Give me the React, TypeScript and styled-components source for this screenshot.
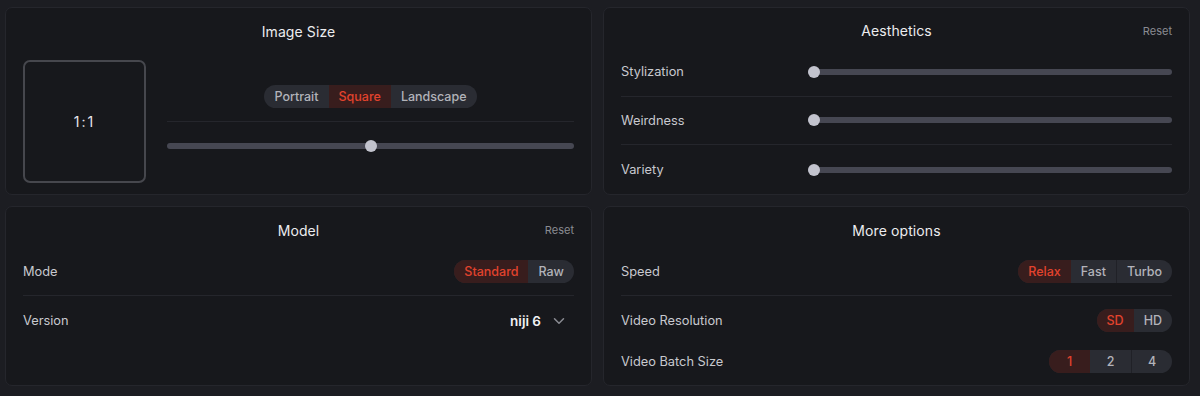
import React from "react";
import styled, { createGlobalStyle } from "styled-components";
import { ChevronDown } from "lucide-react";

const Global = createGlobalStyle`
  html, body { margin: 0; padding: 0; background: #1c1d22; }
  body { font-family: Inter, "Noto Sans", "Liberation Sans", sans-serif; -webkit-font-smoothing: antialiased; }
  * { box-sizing: border-box; }
`;

const Page = styled.div`
  width: 1200px;
  height: 396px;
  padding: 7px 10px 0 5px;
  display: grid;
  grid-template-columns: 587px 587px;
  grid-template-rows: 188px 180px;
  column-gap: 11px;
  row-gap: 11px;
`;

const Card = styled.section`
  background: #17181c;
  border: 1px solid #25262c;
  border-radius: 7px;
  padding: 13px 17px 0;
  display: flex;
  flex-direction: column;
`;

const Header = styled.div`
  display: grid;
  grid-template-columns: 1fr auto 1fr;
  align-items: center;
  height: 20px;
  margin-bottom: 7px;
`;

const Title = styled.h2`
  grid-column: 2;
  margin: 0;
  font-size: 14px;
  font-weight: 400;
  color: #ececef;
  letter-spacing: 0.1px;
`;

const ResetButton = styled.button`
  grid-column: 3;
  justify-self: end;
  background: none;
  border: none;
  padding: 0;
  font-family: inherit;
  font-size: 11px;
  color: #8a8b92;
  cursor: pointer;
`;

const Row = styled.div<{ $h?: number; $divider?: boolean; $cols?: string }>`
  height: ${(p) => p.$h ?? 49}px;
  display: grid;
  grid-template-columns: ${(p) => p.$cols ?? "1fr auto"};
  align-items: center;
  border-bottom: ${(p) => (p.$divider ? "1px solid #25262c" : "none")};
`;

const Label = styled.span`
  font-size: 12.8px;
  color: #c8c9cf;
`;

const Seg = styled.div`
  display: inline-flex;
  height: 23px;
  border-radius: 12px;
  overflow: hidden;
  background: #2a2c33;
`;

const SegItem = styled.button<{ $active?: boolean; $sep?: boolean; $w?: number }>`
  border: none;
  margin: 0;
  font-family: inherit;
  font-size: 12.5px;
  font-weight: 500;
  padding: 0 10px;
  ${(p) => (p.$w ? `width: ${p.$w}px; padding: 0;` : "")}
  display: flex;
  align-items: center;
  justify-content: center;
  background: ${(p) => (p.$active ? "#381d1d" : "transparent")};
  color: ${(p) => (p.$active ? "#e2432d" : "#b2b3ba")};
  border-left: ${(p) => (p.$sep ? "1px solid #202127" : "none")};
  cursor: pointer;
`;

const Track = styled.div`
  position: relative;
  height: 6px;
  border-radius: 3px;
  background: #464752;
  width: 100%;
`;

const Thumb = styled.div`
  position: absolute;
  top: 50%;
  width: 12px;
  height: 12px;
  margin-top: -6px;
  border-radius: 50%;
  background: #c2c3cd;
`;

const SizeBody = styled.div`
  display: flex;
  align-items: center;
  gap: 21px;
  padding: 12px 0 11px;
`;

const RatioBox = styled.div`
  width: 123px;
  height: 123px;
  flex: none;
  border: 2px solid #46474d;
  border-radius: 7px;
  display: flex;
  align-items: center;
  justify-content: center;
  font-size: 14px;
  color: #e6e6ea;
  letter-spacing: 2px;
`;

const SizeControls = styled.div`
  flex: 1;
  display: flex;
  flex-direction: column;
  justify-content: center;
`;

const SizeBlock = styled.div<{ $divider?: boolean }>`
  height: 49px;
  display: flex;
  align-items: center;
  justify-content: center;
  border-bottom: ${(p) => (p.$divider ? "1px solid #25262c" : "none")};
`;

const Select = styled.button`
  display: flex;
  align-items: center;
  gap: 9px;
  background: none;
  border: none;
  padding: 0 6px 0 0;
  font-family: inherit;
  font-size: 13.5px;
  font-weight: 600;
  color: #f1f1f3;
  cursor: pointer;
  svg { color: #8a8b92; }
`;

function Slider({ value }: { value: number }) {
  return (
    <Track>
      <Thumb style={{ left: `calc(${value * 100}% - ${value * 12}px)` }} />
    </Track>
  );
}

function Segmented({
  items,
  active,
  width,
}: {
  items: string[];
  active: number;
  width?: number;
}) {
  return (
    <Seg>
      {items.map((it, i) => (
        <SegItem
          key={it}
          $active={i === active}
          $sep={i > 0 && i !== active && i - 1 !== active}
          $w={width}
        >
          {it}
        </SegItem>
      ))}
    </Seg>
  );
}

export default function App() {
  return (
    <>
      <Global />
      <Page>
        <Card>
          <Header>
            <Title>Image Size</Title>
          </Header>
          <SizeBody>
            <RatioBox>1:1</RatioBox>
            <SizeControls>
              <SizeBlock $divider>
                <Segmented items={["Portrait", "Square", "Landscape"]} active={1} />
              </SizeBlock>
              <SizeBlock>
                <Slider value={0.5} />
              </SizeBlock>
            </SizeControls>
          </SizeBody>
        </Card>

        <Card>
          <Header>
            <Title>Aesthetics</Title>
            <ResetButton>Reset</ResetButton>
          </Header>
          <Row $divider $cols="187px 1fr">
            <Label>Stylization</Label>
            <Slider value={0} />
          </Row>
          <Row $divider $cols="187px 1fr">
            <Label>Weirdness</Label>
            <Slider value={0} />
          </Row>
          <Row $cols="187px 1fr">
            <Label>Variety</Label>
            <Slider value={0} />
          </Row>
        </Card>

        <Card>
          <Header>
            <Title>Model</Title>
            <ResetButton>Reset</ResetButton>
          </Header>
          <Row $divider>
            <Label>Mode</Label>
            <Segmented items={["Standard", "Raw"]} active={0} />
          </Row>
          <Row>
            <Label>Version</Label>
            <Select>
              niji 6
              <ChevronDown size={18} strokeWidth={2} />
            </Select>
          </Row>
        </Card>

        <Card>
          <Header>
            <Title>More options</Title>
          </Header>
          <Row $divider>
            <Label>Speed</Label>
            <Segmented items={["Relax", "Fast", "Turbo"]} active={0} />
          </Row>
          <Row $h={48}>
            <Label>Video Resolution</Label>
            <Segmented items={["SD", "HD"]} active={0} />
          </Row>
          <Row $h={34}>
            <Label>Video Batch Size</Label>
            <Segmented items={["1", "2", "4"]} active={0} width={41} />
          </Row>
        </Card>
      </Page>
    </>
  );
}
